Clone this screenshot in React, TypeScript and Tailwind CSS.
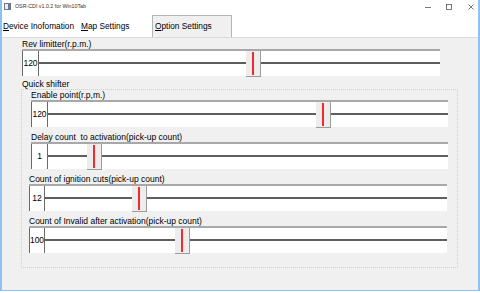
import React from 'react'

type Slider = { label: string; value: string; thumb: number; shift: boolean }

const rev: Slider = { label: 'Rev limitter(r.p.m.)', value: '120', thumb: 207, shift: false }

const quick: Slider[] = [
  { label: 'Enable point(r.p,m.)', value: '120', thumb: 268, shift: true },
  { label: 'Delay count\u00a0 to activation(pick-up count)', value: '1', thumb: 39, shift: true },
  { label: 'Count of ignition cuts(pick-up count)', value: '12', thumb: 87, shift: false },
  { label: 'Count of Invalid after activation(pick-up count)', value: '100', thumb: 130, shift: false },
]

function TrackRow({ s, boxW }: { s: Slider; boxW: string }) {
  return (
    <div className="flex h-[27px] bg-white border-t-2 border-[#a8a8a8]">
      <div
        className={`${boxW} shrink-0 flex items-center justify-center border-l border-r border-[#6a6a6a] text-[8.5px] text-black`}
      >
        {s.value}
      </div>
      <div className="relative flex-1">
        <div className="absolute left-0 right-0 top-[11px] h-[2px] bg-[#5e5e5e]" />
        <div
          className="absolute top-0 h-[26px] w-[15px] bg-[#ededed] border-r border-b border-[#9c9c9c] flex justify-center"
          style={{ left: s.thumb }}
        >
          <div className="w-[2px] h-[23px] mt-[1px] bg-[#ef2b2b]" />
        </div>
      </div>
    </div>
  )
}

function Mnemonic({ first, rest }: { first: string; rest: string }) {
  return (
    <span>
      <span className="underline underline-offset-1">{first}</span>
      {rest}
    </span>
  )
}

export default function App() {
  return (
    <div
      className="w-[480px] h-[293px] bg-white overflow-hidden text-black"
      style={{ fontFamily: '"Liberation Sans", Arial, sans-serif' }}
    >
      <div className="h-[291px] flex flex-col border-l-2 border-r-2 border-b border-[#8dc2ee]">
        {/* Title bar */}
        <div className="h-[13px] flex items-center relative">
          <svg width="7" height="7" viewBox="0 0 7 7" className="ml-[2px]">
            <rect x="0" y="0" width="7" height="7" fill="#6b7a8a" />
            <rect x="1" y="1" width="3" height="5" fill="#e8eef4" />
          </svg>
          <span className="ml-[4px] text-[5.3px] text-[#333] leading-none">OSR-CDI v1.0.2 for Win10Tab</span>
          <div className="ml-auto flex items-center h-full mr-[4px]">
            <svg width="6" height="6" viewBox="0 0 6 6">
              <line x1="0" y1="3.5" x2="6" y2="3.5" stroke="#555" strokeWidth="0.8" />
            </svg>
            <svg width="6" height="6" viewBox="0 0 6 6" className="ml-[15px]">
              <rect x="0.5" y="0.5" width="5" height="5" fill="none" stroke="#555" strokeWidth="0.8" />
            </svg>
            <svg width="6" height="6" viewBox="0 0 6 6" className="ml-[16px]">
              <path d="M0.5 0.5 L5.5 5.5 M5.5 0.5 L0.5 5.5" stroke="#555" strokeWidth="0.8" />
            </svg>
          </div>
        </div>

        {/* Tabs */}
        <div className="h-[24px] flex items-end text-[8.3px]">
          <div className="h-[22px] w-[79px] flex items-center pl-[1px]">
            <Mnemonic first="D" rest="evice Inofomation" />
          </div>
          <div className="h-[22px] w-[71px] flex items-center">
            <Mnemonic first="M" rest="ap Settings" />
          </div>
          <div className="h-[22px] w-[80px] flex items-center pl-[2px] bg-[#f0f0f0] border border-b-0 border-[#b4b4b4]">
            <Mnemonic first="O" rest="ption Settings" />
          </div>
        </div>

        {/* Content */}
        <div className="flex-1 bg-[#f0f0f0] border-t border-[#dadada] pl-[20px] text-[8.5px]">
          <div className="h-[10px] leading-[10px] mt-[1px]">{rev.label}</div>
          <div className="w-[418px]">
            <TrackRow s={rev} boxW="w-[17px]" />
          </div>

          <div className="h-[10px] leading-[10px] mt-[3px]">Quick shifter</div>
          <div className="w-[437px] -ml-[1px] h-[179px] border border-dotted border-[#cfcfcf] pl-[7px]">
            {quick.map((s, i) => (
              <div
                key={s.label}
                className={`${i === 0 ? '' : 'mt-[5px]'} ${s.shift ? 'ml-[2px] w-[417px]' : 'w-[418px]'}`}
              >
                <div className="h-[10px] leading-[10px]">{s.label}</div>
                <TrackRow s={s} boxW={s.shift ? 'w-[17px]' : 'w-[16px]'} />
              </div>
            ))}
          </div>
        </div>
      </div>
    </div>
  )
}
